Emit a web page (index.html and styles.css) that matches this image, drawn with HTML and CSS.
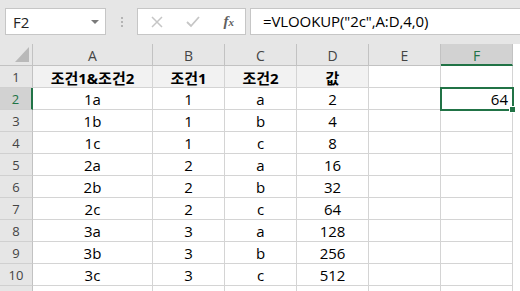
FILE: index.html
```html
<!DOCTYPE html>
<html lang="ko">
<head>
    <meta charset="UTF-8">
    <title>VLOOKUP</title>
    <link rel="stylesheet" href="styles.css">
</head>
<body>

<div class="toolbar">
    <div class="namebox">
        <span>F2</span>
        <svg class="arrow" width="8" height="5" viewBox="0 0 8 5"><polygon points="0,0 8,0 4,4" fill="#7a7a7a"/></svg>
    </div>
    <div class="grip"><i></i><i></i><i></i></div>
    <div class="fxbtns">
        <svg width="12" height="12" viewBox="0 0 12 12"><path d="M1 1 L11 11 M11 1 L1 11" stroke="#c6c6c6" stroke-width="1.5"/></svg>
        <svg width="14" height="12" viewBox="0 0 14 12"><path d="M1 6 L5 10 L13 1" stroke="#c6c6c6" stroke-width="1.8" fill="none"/></svg>
        <span class="fx">f<sub>x</sub></span>
    </div>
    <div class="formula">=VLOOKUP("2c",A:D,4,0)</div>
</div>

<div class="sheet">
    <div class="hd corner"><svg width="14" height="15" viewBox="0 0 14 15"><polygon points="14,0 14,15 0,15" fill="#b9b9b9"/></svg></div>
    <div class="hd col">A</div>
    <div class="hd col">B</div>
    <div class="hd col">C</div>
    <div class="hd col">D</div>
    <div class="hd col">E</div>
    <div class="hd col active">F</div>

    <div class="hd row">1</div>
    <div class="c title">조건1&amp;조건2</div>
    <div class="c title">조건1</div>
    <div class="c title">조건2</div>
    <div class="c title">값</div>
    <div class="c"></div>
    <div class="c"></div>

    <div class="hd row active">2</div>
    <div class="c">1a</div><div class="c">1</div><div class="c">a</div><div class="c">2</div>
    <div class="c"></div>
    <div class="c num selected">64<span class="handle"></span></div>

    <div class="hd row">3</div>
    <div class="c">1b</div><div class="c">1</div><div class="c">b</div><div class="c">4</div>
    <div class="c"></div><div class="c"></div>

    <div class="hd row">4</div>
    <div class="c">1c</div><div class="c">1</div><div class="c">c</div><div class="c">8</div>
    <div class="c"></div><div class="c"></div>

    <div class="hd row">5</div>
    <div class="c">2a</div><div class="c">2</div><div class="c">a</div><div class="c">16</div>
    <div class="c"></div><div class="c"></div>

    <div class="hd row">6</div>
    <div class="c">2b</div><div class="c">2</div><div class="c">b</div><div class="c">32</div>
    <div class="c"></div><div class="c"></div>

    <div class="hd row">7</div>
    <div class="c">2c</div><div class="c">2</div><div class="c">c</div><div class="c">64</div>
    <div class="c"></div><div class="c"></div>

    <div class="hd row">8</div>
    <div class="c">3a</div><div class="c">3</div><div class="c">a</div><div class="c">128</div>
    <div class="c"></div><div class="c"></div>

    <div class="hd row">9</div>
    <div class="c">3b</div><div class="c">3</div><div class="c">b</div><div class="c">256</div>
    <div class="c"></div><div class="c"></div>

    <div class="hd row">10</div>
    <div class="c">3c</div><div class="c">3</div><div class="c">c</div><div class="c">512</div>
    <div class="c"></div><div class="c"></div>

    <!-- row 11: only its top edge shows -->
    <div class="hd row"></div>
    <div class="c"></div><div class="c"></div><div class="c"></div><div class="c"></div>
    <div class="c"></div><div class="c"></div>
</div>

</body>
</html>
```

FILE: styles.css
```css
* {
    box-sizing: border-box;
}
body {
    margin: 0;
    background: #e6e6e6;
    font-family: "Open Sans", "Noto Sans CJK KR", sans-serif;
    color: #000;
    overflow: hidden;
}
.toolbar {
    display: flex;
    align-items: flex-start;
    height: 44px;
    padding: 8px 0 0 5px;
}
.namebox {
    width: 101px;
    height: 27px;
    background: white;
    border: 1px solid #c6c6c6;
    display: flex;
    align-items: center;
    justify-content: space-between;
    padding: 0 6px 0 7px;
    font-size: 15px;
    color: #222;
}
.namebox .arrow {
    margin-top: 1px;
}
.grip {
    width: 31px;
    height: 27px;
    display: flex;
    flex-direction: column;
    align-items: center;
    justify-content: center;
    gap: 2px;
}
.grip i {
    width: 2px;
    height: 2px;
    background: #b4b4b4;
}
.fxbtns {
    width: 109px;
    height: 27px;
    background: white;
    border: 1px solid #c6c6c6;
    display: flex;
    align-items: center;
    justify-content: space-between;
    padding: 0 11px 0 13px;
}
.fx {
    font-family: "Liberation Serif", serif;
    font-style: italic;
    font-weight: bold;
    font-size: 15px;
    color: #606060;
}
.fx sub {
    font-size: 11px;
    vertical-align: 0;
}
.formula {
    flex: 1;
    height: 27px;
    margin-left: 4px;
    background: white;
    border: 1px solid #c6c6c6;
    border-right: none;
    padding-left: 12px;
    font-size: 15px;
    letter-spacing: -0.1px;
    line-height: 25px;
    white-space: nowrap;
}
.sheet {
    display: grid;
    grid-template-columns: 33px 120px 72px 72px 72px 72px 72px;
    grid-auto-rows: 22px;
    background: white;
}
.hd {
    background: #e6e6e6;
    color: #444;
    font-size: 13px;
    display: flex;
    align-items: center;
    justify-content: center;
    border-right: 1px solid #c2c2c2;
    border-bottom: 1px solid #c2c2c2;
}
.hd.col {
    padding-top: 2px;
    font-size: 14px;
}
.hd.row {
    border-bottom-color: #d0d0d0;
}
.hd.corner {
    justify-content: flex-end;
    align-items: flex-end;
    padding: 0 3px 3px 0;
}
.hd.active {
    background: #d2d2d2;
    color: #217346;
}
.hd.col.active {
    border-bottom: 2px solid #217346;
}
.hd.row.active {
    border-right: 2px solid #217346;
}
.c {
    font-size: 15px;
    display: flex;
    align-items: center;
    justify-content: center;
    padding-top: 1px;
    border-right: 1px solid #d4d4d4;
    border-bottom: 1px solid #d4d4d4;
    white-space: nowrap;
}
.c.title {
    background: #f2f2f2;
    font-weight: bold;
}
.c.num {
    justify-content: flex-end;
    padding-right: 4px;
}
.c.selected {
    position: relative;
    z-index: 1;
    outline: 2px solid #217346;
    outline-offset: -1px;
}
.handle {
    position: absolute;
    right: -4px;
    bottom: -4px;
    width: 7px;
    height: 7px;
    background: #217346;
    border: 1px solid white;
}
```
